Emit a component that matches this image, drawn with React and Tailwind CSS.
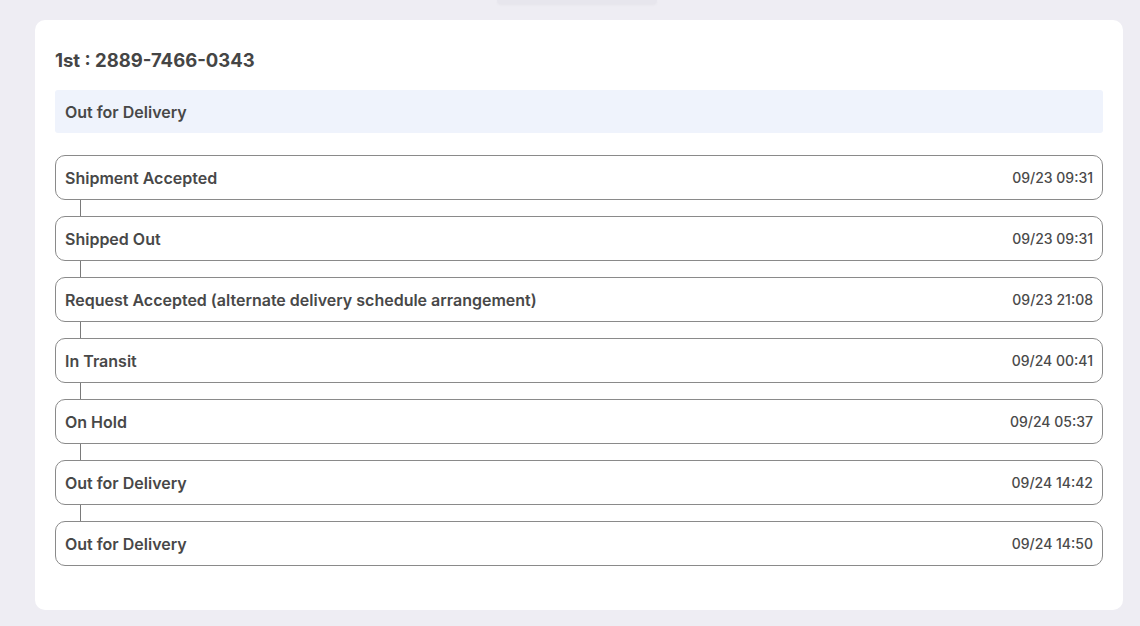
export default function App() {
  const events = [
    ["Shipment Accepted", "09/23 09:31"],
    ["Shipped Out", "09/23 09:31"],
    ["Request Accepted (alternate delivery schedule arrangement)", "09/23 21:08"],
    ["In Transit", "09/24 00:41"],
    ["On Hold", "09/24 05:37"],
    ["Out for Delivery", "09/24 14:42"],
    ["Out for Delivery", "09/24 14:50"],
  ];
  return (
    <div className="h-[626px] w-full overflow-hidden bg-[#eeedf3] relative" style={{ fontFamily: "Inter, 'Noto Sans', sans-serif" }}>
      <div className="absolute left-[497px] top-0 w-[160px] h-[4px] rounded-b-md bg-[#e7e6ed] shadow-[0_1px_3px_rgba(0,0,0,0.04)]" />
      <div className="pt-[20px] pl-[35px] pr-[17px]">
        <div className="bg-white rounded-[10px] px-[20px] pt-[28px] pb-[44px]">
          <h2 className="text-[18.5px] font-bold text-[#454545] leading-[24px]">1st : 2889-7466-0343</h2>
          <div className="mt-[18px] h-[43px] bg-[#eff3fc] rounded-[3px] flex items-center px-[10px] text-[16px] font-semibold text-[#484848]">
            Out for Delivery
          </div>
          <div className="mt-[22px] flex flex-col">
            {events.map(([label, time], i) => (
              <div key={i} className="flex flex-col">
                {i > 0 && <div className="ml-[25px] w-px h-[16px] bg-[#7a7a7a]" />}
                <div className="h-[45px] border border-[#8a8a8a] rounded-[10px] flex items-center justify-between px-[9px]">
                  <span className="text-[16px] font-semibold text-[#484848]">{label}</span>
                  <span className="text-[14px] font-medium text-[#4a4a4a]">{time}</span>
                </div>
              </div>
            ))}
          </div>
        </div>
      </div>
    </div>
  );
}
